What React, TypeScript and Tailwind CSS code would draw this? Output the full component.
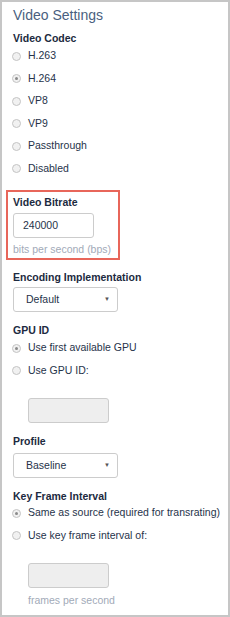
import React from "react";

const font = { fontFamily: '"Liberation Sans", Arial, sans-serif' };

function Radio({ label, checked }: { label: string; checked?: boolean }) {
  return (
    <div className="flex items-center h-[22.5px]">
      <span className="w-[9px] h-[9px] ml-[-1px] rounded-full border border-[#c4c4c4] bg-[#f1f1f1] flex items-center justify-center shrink-0">
        {checked && <span className="w-[3px] h-[3px] rounded-full bg-[#8a8a8a]" />}
      </span>
      <span className="ml-[7px] text-[10.5px] text-[#26334a] whitespace-nowrap">{label}</span>
    </div>
  );
}

function Label({ children, className = "" }: { children: React.ReactNode; className?: string }) {
  return (
    <div className={"text-[10.5px] font-bold leading-[16px] h-[16px] text-[#1c2a40] whitespace-nowrap " + className}>
      {children}
    </div>
  );
}

function Select({ value, className = "" }: { value: string; className?: string }) {
  return (
    <div
      className={
        "w-[105px] h-[25px] border border-[#cccccc] rounded-[3px] bg-white flex items-center justify-between pl-[12px] pr-[7px] " +
        className
      }
    >
      <span className="text-[10.5px] text-[#26334a]">{value}</span>
      <span className="text-[6px] text-[#555]">▼</span>
    </div>
  );
}

export default function App() {
  return (
    <div style={font} className="w-[230px] h-[617px] bg-white border-2 border-[#c6c6c6] overflow-hidden">
      <div className="pl-[11px] pt-[3px]">
        <div className="text-[14px] leading-[20px] text-[#4a5f80]">Video Settings</div>

        <Label className="mt-[5px]">Video Codec</Label>
        <div className="-mt-[1px]">
          <Radio label="H.263" />
          <Radio label="H.264" checked />
          <Radio label="VP8" />
          <Radio label="VP9" />
          <Radio label="Passthrough" />
          <Radio label="Disabled" />
        </div>

        <div className="mt-[10px] ml-[-7px] w-[114px] border-2 border-[#e8665a] pl-[5px] pt-[2px] pb-[2px]">
          <Label>Video Bitrate</Label>
          <div className="mt-[3px] w-[81px] h-[25px] border border-[#cccccc] rounded-[3px] flex items-center pl-[9px] text-[10.5px] text-[#26334a]">
            240000
          </div>
          <div className="mt-[4px] text-[10.5px] leading-[14px] text-[#a2aab8] whitespace-nowrap">bits per second (bps)</div>
        </div>

        <Label className="mt-[9px]">Encoding Implementation</Label>
        <Select value="Default" className="mt-[2px]" />

        <Label className="mt-[10px]">GPU ID</Label>
        <div className="-mt-[1px]">
          <Radio label="Use first available GPU" checked />
          <Radio label="Use GPU ID:" />
        </div>
        <div className="mt-[16px] ml-[15px] w-[81px] h-[25px] border border-[#cccccc] rounded-[3px] bg-[#eeeeee]" />

        <Label className="mt-[10px]">Profile</Label>
        <Select value="Baseline" className="mt-[4px]" />

        <div className="mt-[11px] text-[10.5px] font-bold leading-[14px] h-[14px] text-[#1c2a40]">Key Frame Interval</div>
        <div className="-mt-[1px]">
          <Radio label="Same as source (required for transrating)" checked />
          <Radio label="Use key frame interval of:" />
        </div>
        <div className="mt-[16px] ml-[15px] w-[81px] h-[25px] border border-[#cccccc] rounded-[3px] bg-[#eeeeee]" />
        <div className="mt-[5px] ml-[15px] text-[10.5px] leading-[14px] text-[#a2aab8]">frames per second</div>
      </div>
    </div>
  );
}
